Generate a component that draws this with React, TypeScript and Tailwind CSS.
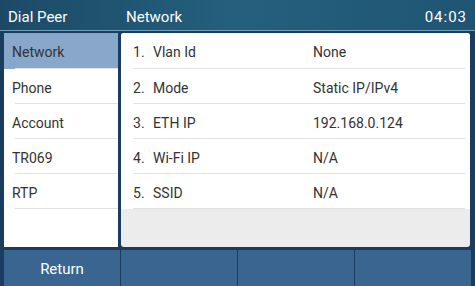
import React from 'react';

const menu = ['Network', 'Phone', 'Account', 'TR069', 'RTP'];

const rows = [
    { label: 'Vlan Id', value: 'None' },
    { label: 'Mode', value: 'Static IP/IPv4' },
    { label: 'ETH IP', value: '192.168.0.124' },
    { label: 'Wi-Fi IP', value: 'N/A' },
    { label: 'SSID', value: 'N/A' },
];

const App: React.FC = () => {
    return (
        <div
            className="w-[475px] h-[286px] flex flex-col bg-[#1a3c5f] overflow-hidden text-[14px]"
            style={{ fontFamily: 'Roboto, "Liberation Sans", sans-serif' }}
        >
            {/* Title bar */}
            <div className="h-[31px] pt-[4px] flex items-center bg-gradient-to-r from-[#1c4a66] via-[#24607e] to-[#1f5572] text-white border-b border-[#6f9fbb]">
                <span className="w-[121px] pl-2 text-[15px]">Dial Peer</span>
                <span className="flex-1 pl-[5px] text-[15px]">Network</span>
                <span className="pr-2 text-[15px] tracking-[1px]">04:03</span>
            </div>

            {/* Body */}
            <div className="flex gap-[3px] pt-[2px] pl-1 pr-[5px] h-[216px]">
                <div className="w-[114px] bg-white flex flex-col">
                    {menu.map((m, i) => (
                        <div
                            key={m}
                            className={`${i === 0 ? 'h-[36px] bg-[#89a7cb]' : 'h-[35px]'} flex flex-col text-[#333]`}
                        >
                            <div className="flex-1 flex items-center pl-[8px] pt-[4px]">{m}</div>
                            <div className="ml-[11px] h-[1px] bg-[#e2e2e2]" />
                        </div>
                    ))}
                </div>
                <div className="flex-1 bg-[#ececec] rounded-[3px] overflow-hidden flex flex-col">
                    <div className="bg-white flex flex-col">
                        {rows.map((r, i) => (
                            <div
                                key={r.label}
                                className={`${i === 0 ? 'h-[36px]' : 'h-[35px]'} flex pl-[12px] pr-[5px] text-[#333]`}
                            >
                                <div className="flex-1 h-full flex items-center pt-[4px] border-b border-[#e2e2e2]">
                                    <span className="w-[20px]">{i + 1}.</span>
                                    <span className="w-[160px]">{r.label}</span>
                                    <span>{r.value}</span>
                                </div>
                            </div>
                        ))}
                    </div>
                </div>
            </div>

            {/* Soft keys */}
            <div className="flex-1 mt-[3px] flex pl-1 pr-1 gap-[1px]">
                {['Return', '', '', ''].map((b, i) => (
                    <div key={i} className="flex-1 bg-[#3a6590] text-white flex items-center justify-center pt-[3px] text-[15px]">
                        {b}
                    </div>
                ))}
            </div>
        </div>
    );
};

export default App;
